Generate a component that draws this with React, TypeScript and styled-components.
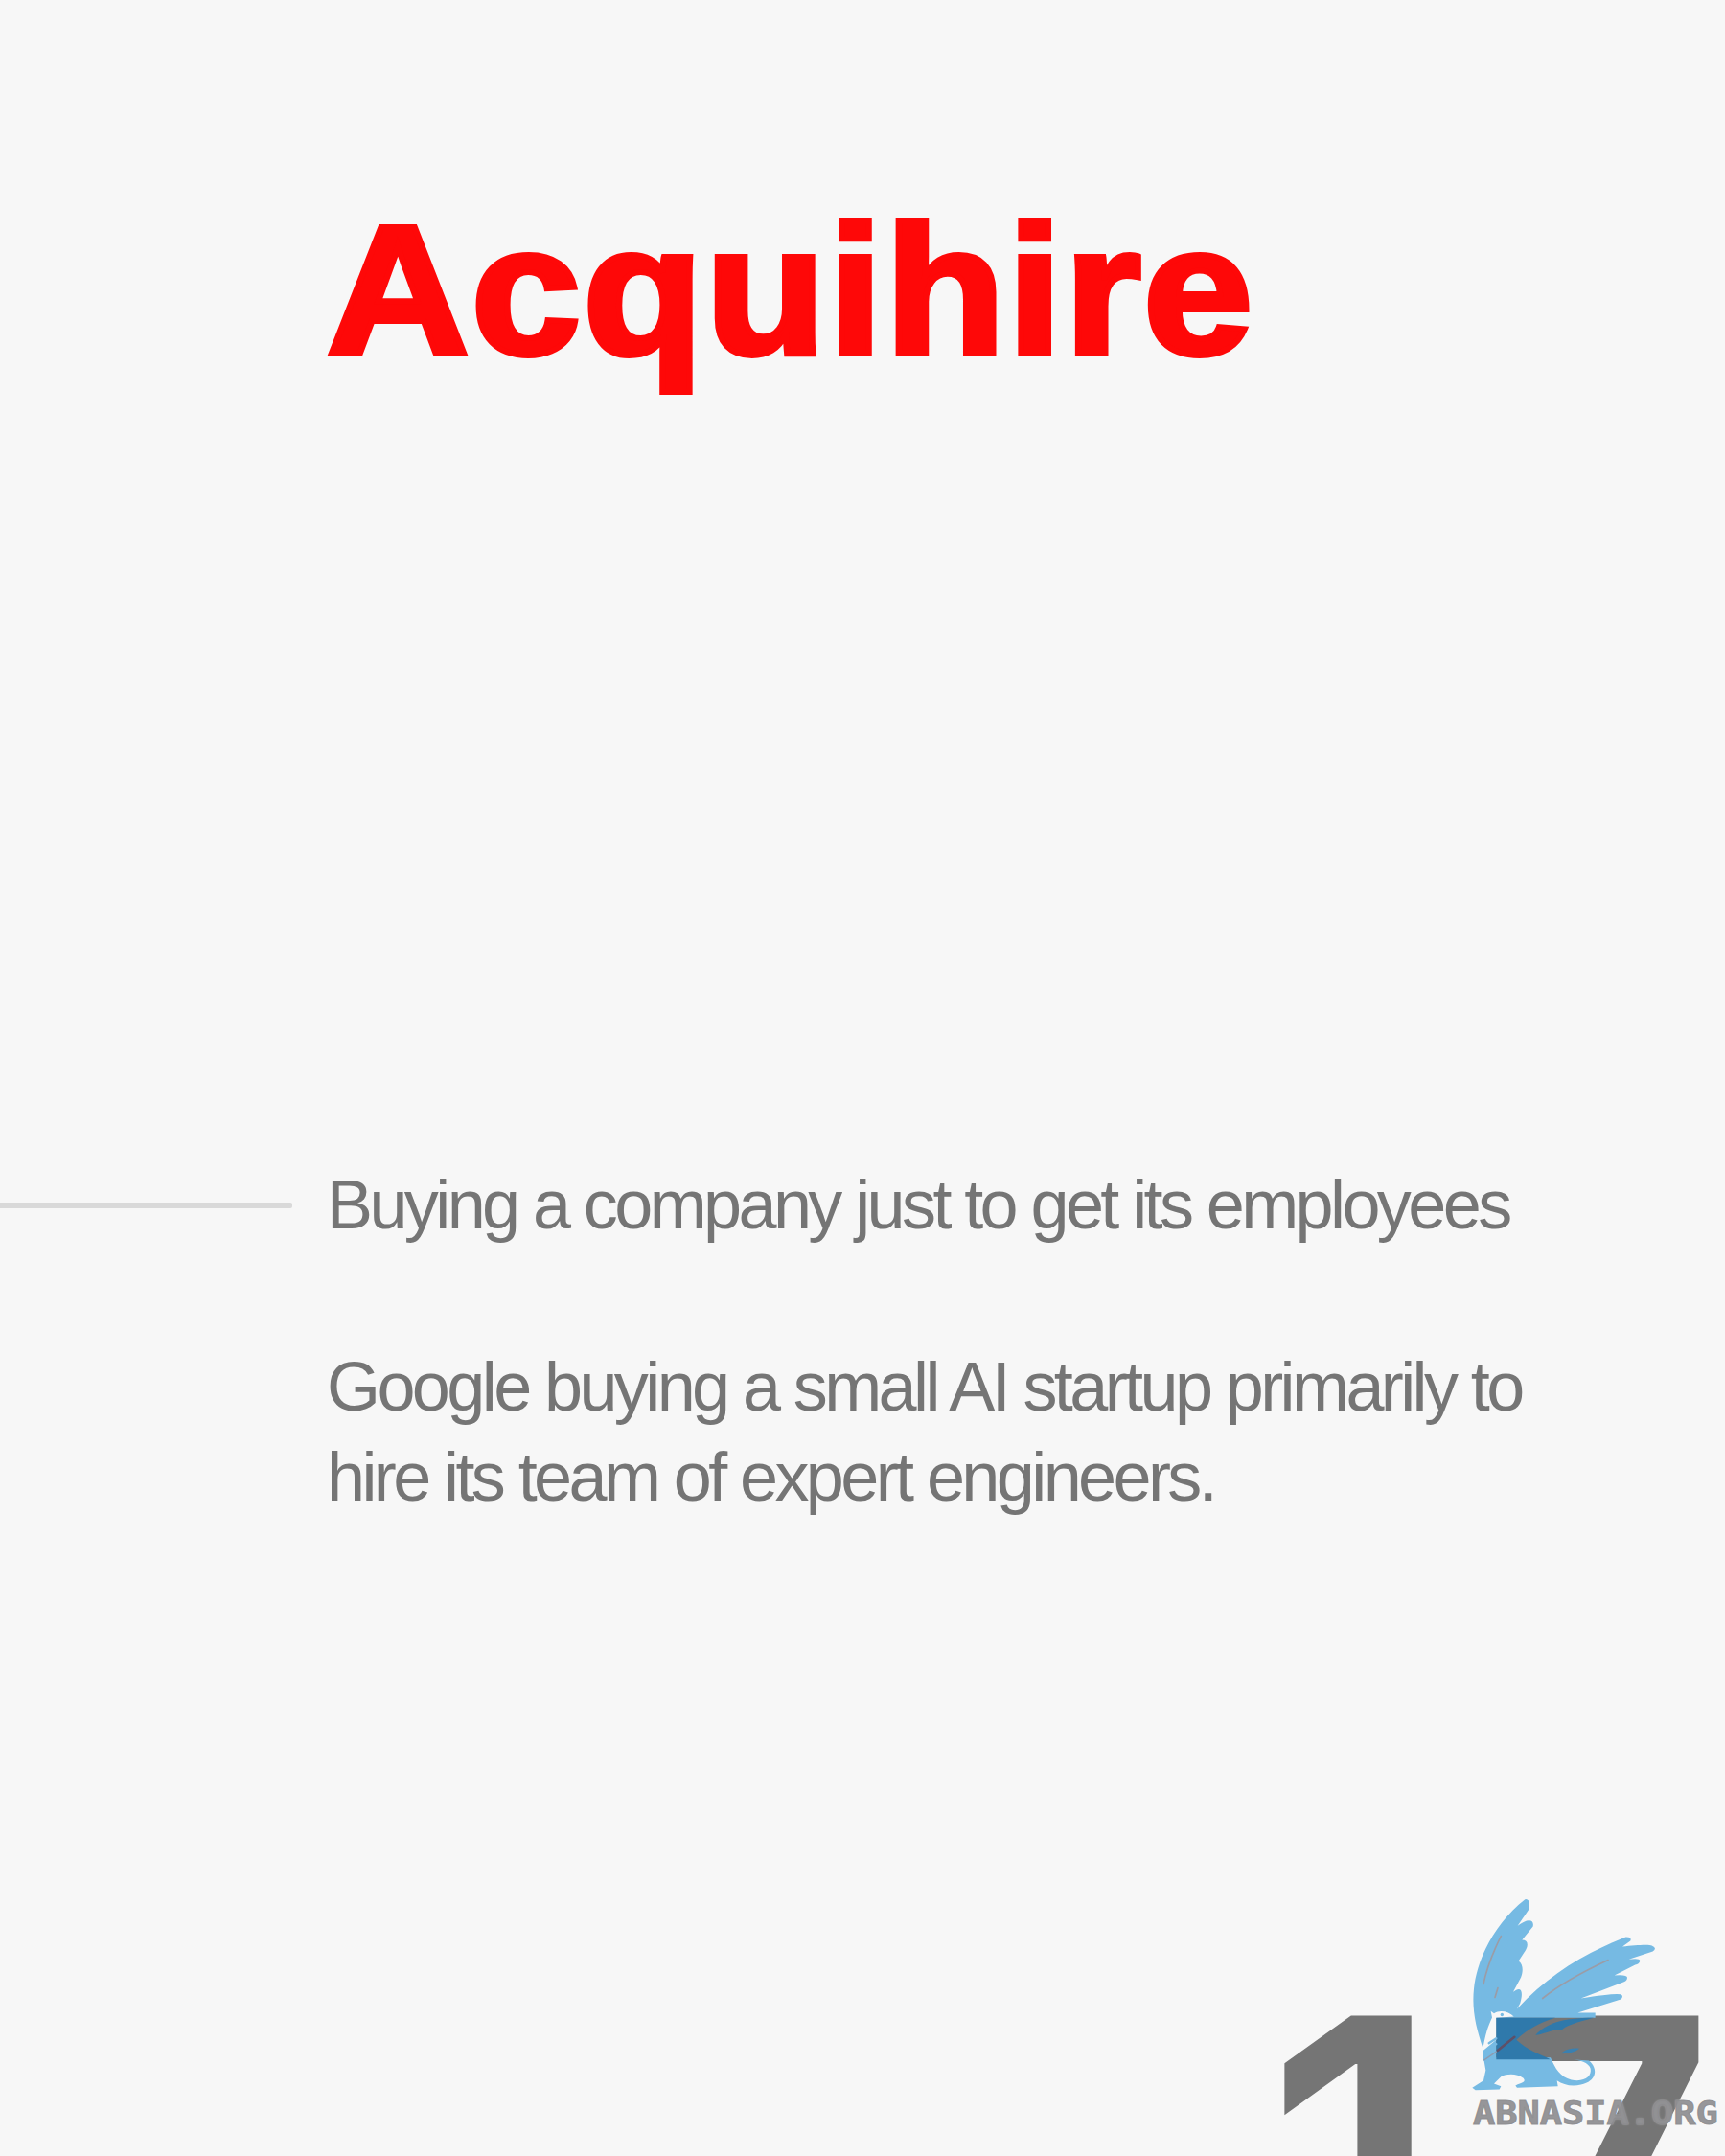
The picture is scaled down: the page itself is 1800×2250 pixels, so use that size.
import React from "react";
import styled, { createGlobalStyle } from "styled-components";

const Global = createGlobalStyle`
  html, body { margin: 0; padding: 0; background: #f7f7f7; }
`;

const Page = styled.main`
  position: relative;
  width: 1800px;
  height: 2250px;
  overflow: hidden;
  box-sizing: border-box;
  padding-top: 207px;
  background: #f7f7f7;
  font-family: "Liberation Sans", Arial, sans-serif;
`;

const Title = styled.h1`
  margin: 0 0 0 341px;
  font-size: 192px;
  line-height: 192px;
  font-weight: 700;
  letter-spacing: 2.2px;
  color: #fe0808;
  -webkit-text-stroke: 6px #fe0808;
  transform: scaleX(1.07);
  transform-origin: left center;
`;

const Row = styled.section`
  display: flex;
  align-items: flex-start;
  gap: 36px;
  margin-top: 811px;
`;

const Rule = styled.div`
  flex: none;
  width: 305px;
  height: 6px;
  margin-top: 45px;
  border-radius: 0 2px 2px 0;
  background: #d9d9d9;
`;

const Copy = styled.div`
  width: 1300px;
  color: #757575;
  font-size: 72px;
  line-height: 94px;
  letter-spacing: -3.6px;
`;

const Para = styled.p`
  margin: 0 0 96px;
  &:last-child { margin-bottom: 0; }
`;

const PageNumber = styled.div`
  margin-top: 457px;
  display: flex;
  justify-content: flex-end;
  gap: 35px;
  padding-right: 10px;
  font-family: Inter, sans-serif;
  font-weight: 600;
  font-size: 435px;
  line-height: 1;
  color: #757575;
`;

const Watermark = styled.div`
  position: absolute;
  left: 1533px;
  top: 1977px;
  width: 267px;
  height: 250px;
`;

const Griffin = styled.svg`
  display: block;
  width: 200px;
  height: 207px;
`;

const Brand = styled.div`
  position: absolute;
  left: 4px;
  top: 212px;
  font-family: "DejaVu Sans Mono", monospace;
  font-weight: 700;
  font-size: 33px;
  line-height: 33px;
  white-space: nowrap;
  color: rgba(140, 140, 143, 0.92);
  -webkit-text-stroke: 1px rgba(140, 140, 143, 0.92);
  text-shadow: 0 0 2px rgba(255, 255, 255, 0.6);
  transform: scaleX(1.17);
  transform-origin: left center;
`;

const upper =
  "M745 565 C722 500 708 440 715 375 C725 280 780 170 875 95 Q892 92 888 125 L852 178 C880 155 905 155 900 180 L866 222 C885 222 888 240 872 262 L855 288 C872 300 868 325 862 340 L838 385 C860 366 872 378 860 420 L850 438 C950 330 1060 265 1190 213 Q1210 212 1205 225 L1180 243 C1220 238 1265 235 1272 240 Q1290 248 1275 258 L1200 283 Q1235 278 1235 288 Q1232 298 1220 300 L1155 333 Q1195 330 1195 340 Q1195 350 1185 353 L1050 405 Q1150 388 1175 392 Q1185 398 1175 408 L1040 450 L1095 450 L1095 466 L785 466 L785 596 L745 600 Z";
const lower =
  "M785 590 L955 590 C970 625 985 650 1020 660 C1060 668 1085 650 1080 625 C1075 605 1045 598 1020 596 L1075 600 C1105 625 1100 665 1050 675 C1020 682 995 675 975 662 L978 680 L850 685 L845 678 C865 668 880 668 870 655 C850 640 820 640 800 650 L778 672 L800 680 L795 690 L720 692 L710 685 L745 662 L752 630 L745 590 Z";

export default function App() {
  return (
    <Page>
      <Global />
      <Title>Acquihire</Title>
      <Row>
        <Rule />
        <Copy>
          <Para>Buying a company just to get its employees</Para>
          <Para>Google buying a small AI startup primarily to hire its team of expert engineers.</Para>
        </Copy>
      </Row>
      <PageNumber>
        <span>1</span>
        <span>7</span>
      </PageNumber>
      <Watermark>
        <Griffin viewBox="700 80 600 620" aria-hidden="true">
          <path d={upper} fill="#76bae3" />
          <path d={lower} fill="#76bae3" />
          <path d="M768 445 L778 452 C795 440 825 445 840 462 L785 466 L785 535 L742 570 C750 520 760 490 772 465 Z" fill="#f7f7f7" />
          <circle cx="803" cy="456" r="5" fill="#76bae3" />
          <path d="M785 466 L970 466 C920 480 880 505 848 535 C880 565 920 580 955 596 L785 596 Z" fill="#2f79ab" />
          <path d="M908 520 C940 485 990 466 1090 466 C1040 480 1000 490 990 505 C960 500 930 520 908 520 Z" fill="#2f79ab" />
          <path d="M990 575 C1010 560 1030 560 1045 562 C1030 575 1010 578 990 578 Z" fill="#3a80b0" />
          <path d="M800 210 C775 260 755 310 745 360" fill="none" stroke="#9b9ca6" strokeWidth="5" strokeLinecap="round" />
          <path d="M790 372 L781 402" fill="none" stroke="#9b9ca6" strokeWidth="5" strokeLinecap="round" />
          <path d="M1135 285 C1060 320 985 360 930 405" fill="none" stroke="#9b9ca6" strokeWidth="5" strokeLinecap="round" />
          <path d="M842 526 L790 568" fill="none" stroke="#5e5068" strokeWidth="8" strokeLinecap="round" />
          <path d="M785 572 L747 598" fill="none" stroke="#8d9bb0" strokeWidth="4" strokeLinecap="round" />
          <path d="M762 545 L785 530 M768 560 L785 548" fill="none" stroke="#76bae3" strokeWidth="7" strokeLinecap="round" />
        </Griffin>
        <Brand>ABNASIA.ORG</Brand>
      </Watermark>
    </Page>
  );
}
